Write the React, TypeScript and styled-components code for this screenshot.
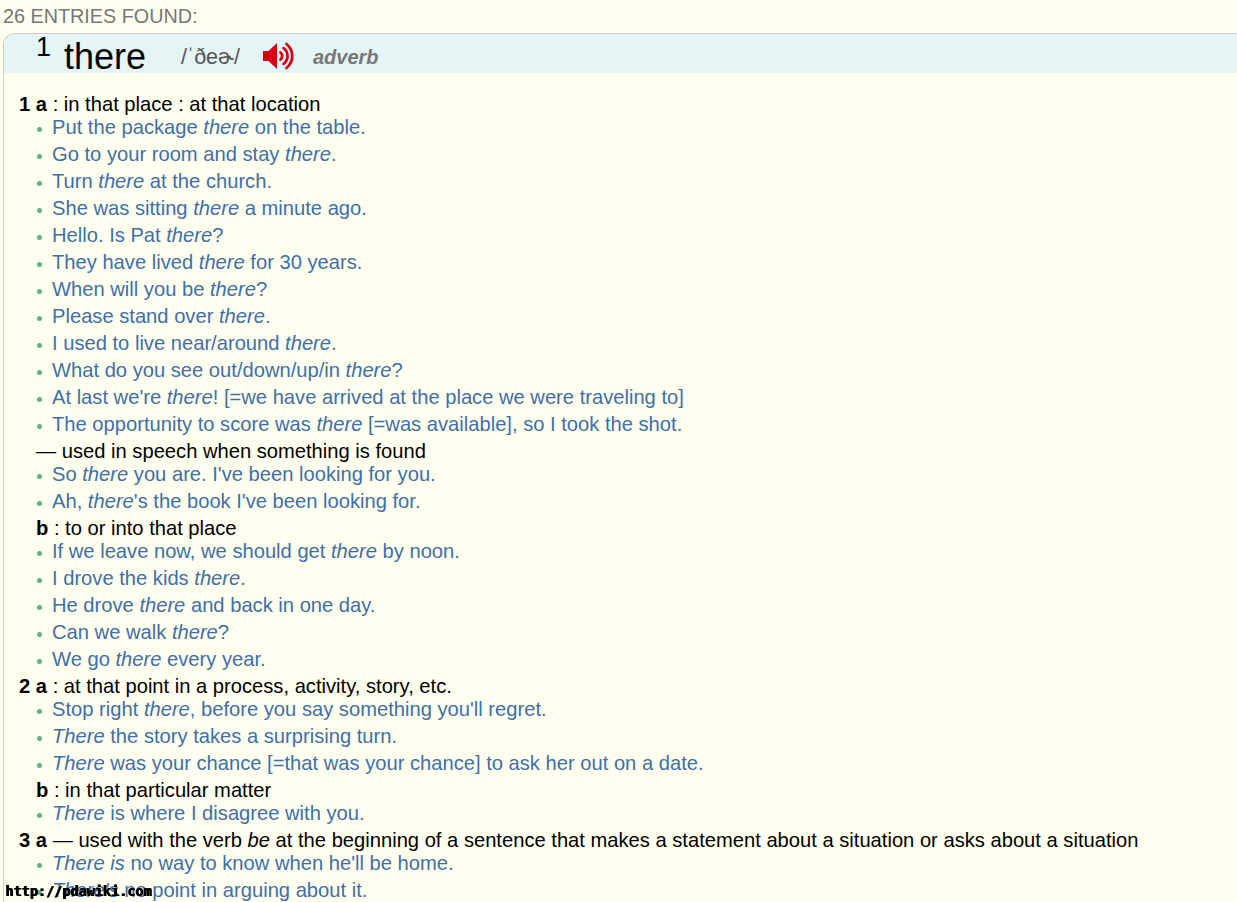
import styled, { createGlobalStyle } from 'styled-components';

const GlobalStyle = createGlobalStyle`
    html, body {
        margin: 0;
        padding: 0;
        height: 100%;
        overflow: hidden;
        background: #fffff0;
        font-family: "Liberation Sans", Arial, sans-serif;
    }
`

const Page = styled.div`
    height: 902px;
    overflow: hidden;
    padding: 4px 0 0 3px;
    box-sizing: border-box;
`

const EntriesCount = styled.div`
    font-size: 19.800px;
    line-height: 24px;
    color: #777;
    margin-bottom: 5px;
`

const Card = styled.div`
    border-top: 1px solid #ccc;
    border-left: 1px solid #ccc;
    border-top-left-radius: 12px;
    margin-right: -12px;
`

const CardHeader = styled.div`
    height: 39px;
    background: #e5f4f5;
    border-top-left-radius: 11px;
    display: flex;
    align-items: flex-start;
    color: #000;
`

const HomographNumber = styled.span`
    font-size: 27px;
    line-height: 26px;
    margin-left: 32px;
    width: 28px;
`

const Headword = styled.span`
    font-size: 36px;
    line-height: 46px;
    width: 117px;
`

const Pronunciation = styled.span`
    font-size: 21.500px;
    line-height: 46px;
    color: #555;
    width: 82px;
    white-space: nowrap;
`

const SpeakerButton = styled.svg`
    width: 32px;
    height: 28px;
    margin-top: 8px;
    margin-right: 18px;
`

const PartOfSpeech = styled.em`
    font-size: 20px;
    font-weight: bold;
    line-height: 46px;
    color: #777;
`

const Body = styled.div`
    padding: 20px 0 0 15px;
`

const Definition = styled.div<{ $nested?: boolean }>`
    font-size: 20.160px;
    line-height: 23px;
    color: #000;
    padding-left: ${({ $nested }) => ($nested ? '17px' : '0')};
    white-space: nowrap;
`

const Example = styled.div`
    position: relative;
    font-size: 20.160px;
    line-height: 23px;
    color: #3f6fa5;
    margin-bottom: 4px;
    padding-left: 33px;
    white-space: nowrap;

    &::before {
        content: '';
        position: absolute;
        left: 18px;
        top: 11px;
        width: 5px;
        height: 5px;
        border-radius: 50%;
        background: #5fb08d;
    }
`

const Watermark = styled.div`
    position: fixed;
    left: 5px;
    bottom: 3px;
    font-family: "DejaVu Sans Mono", monospace;
    font-size: 13.500px;
    font-weight: bold;
    line-height: 16px;
    color: #000;
    text-shadow: 1px 0 0 #000;
`

type Line =
    | { kind: 'def'; label: string; text: React.ReactNode; nested?: boolean }
    | { kind: 'ex'; text: React.ReactNode };

const ex = (text: React.ReactNode): Line => ({ kind: 'ex', text });
const def = (label: string, text: React.ReactNode, nested?: boolean): Line => ({ kind: 'def', label, text, nested });

const lines: Line[] = [
    def('1 a', ' : in that place : at that location'),
    ex(<>Put the package <i>there</i> on the table.</>),
    ex(<>Go to your room and stay <i>there</i>.</>),
    ex(<>Turn <i>there</i> at the church.</>),
    ex(<>She was sitting <i>there</i> a minute ago.</>),
    ex(<>Hello. Is Pat <i>there</i>?</>),
    ex(<>They have lived <i>there</i> for 30 years.</>),
    ex(<>When will you be <i>there</i>?</>),
    ex(<>Please stand over <i>there</i>.</>),
    ex(<>I used to live near/around <i>there</i>.</>),
    ex(<>What do you see out/down/up/in <i>there</i>?</>),
    ex(<>At last we're <i>there</i>! [=we have arrived at the place we were traveling to]</>),
    ex(<>The opportunity to score was <i>there</i> [=was available], so I took the shot.</>),
    def('', '— used in speech when something is found', true),
    ex(<>So <i>there</i> you are. I've been looking for you.</>),
    ex(<>Ah, <i>there</i>'s the book I've been looking for.</>),
    def('b', ' : to or into that place', true),
    ex(<>If we leave now, we should get <i>there</i> by noon.</>),
    ex(<>I drove the kids <i>there</i>.</>),
    ex(<>He drove <i>there</i> and back in one day.</>),
    ex(<>Can we walk <i>there</i>?</>),
    ex(<>We go <i>there</i> every year.</>),
    def('2 a', ' : at that point in a process, activity, story, etc.'),
    ex(<>Stop right <i>there</i>, before you say something you'll regret.</>),
    ex(<><i>There</i> the story takes a surprising turn.</>),
    ex(<><i>There</i> was your chance [=that was your chance] to ask her out on a date.</>),
    def('b', ' : in that particular matter', true),
    ex(<><i>There</i> is where I disagree with you.</>),
    def('3 a', <> — used with the verb <i>be</i> at the beginning of a sentence that makes a statement about a situation or asks about a situation</>),
    ex(<><i>There is</i> no way to know when he'll be home.</>),
    ex(<><i>There's</i> no point in arguing about it.</>),
];

const App = () => {
    return (
        <Page>
            <GlobalStyle />
            <EntriesCount>26 ENTRIES FOUND:</EntriesCount>
            <Card>
                <CardHeader>
                    <HomographNumber>1</HomographNumber>
                    <Headword>there</Headword>
                    <Pronunciation>/ˈðeɚ/</Pronunciation>
                    <SpeakerButton viewBox="0 0 32 28">
                        <path d="M0 9h5.500L14 1v26l-8.500-8H0z" fill="#d40018" />
                        <path d="M17.500 10.500a4.500 4.500 0 0 1 0 7" fill="none" stroke="#d40018" strokeWidth="2.800" strokeLinecap="round" />
                        <path d="M20.500 6a10 10 0 0 1 0 16" fill="none" stroke="#d40018" strokeWidth="2.800" strokeLinecap="round" />
                        <path d="M23.500 2a15.500 15.500 0 0 1 0 24" fill="none" stroke="#d40018" strokeWidth="2.800" strokeLinecap="round" />
                    </SpeakerButton>
                    <PartOfSpeech>adverb</PartOfSpeech>
                </CardHeader>
                <Body>
                    {lines.map((line, i) =>
                        line.kind === 'def' ? (
                            <Definition key={i} $nested={line.nested}>
                                {line.label && <b>{line.label}</b>}
                                {line.text}
                            </Definition>
                        ) : (
                            <Example key={i}>{line.text}</Example>
                        )
                    )}
                </Body>
            </Card>
            <Watermark>http://pdawiki.com</Watermark>
        </Page>
    )
}

export default App
